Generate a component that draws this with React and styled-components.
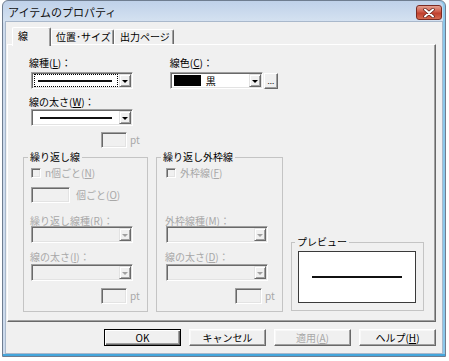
import React from 'react';
import styled, { createGlobalStyle } from 'styled-components';

const Global = createGlobalStyle`
  html, body { margin: 0; padding: 0; background: #ffffff; }
  body { font-family: "Noto Sans CJK JP", "Noto Sans", sans-serif; }
  * { box-sizing: border-box; }
`;

const Window = styled.div`
  margin-left: 2px;
  width: 444px;
  height: 357px;
  border: 1px solid #6f7d90;
  border-radius: 6px 6px 0 0;
  padding: 0 2px 2px 2px;
  background: linear-gradient(#bfd1e9, #d5e2f1 21px, #cddbed 22px, #cddbed);
  box-shadow: inset 0 -2px 0 #45a6dc, inset -2px 0 0 #8cc8ea;
  display: flex;
  flex-direction: column;
`;

const TitleBar = styled.div`
  height: 20px;
  display: flex;
  align-items: center;
  padding-left: 3px;
`;

const Title = styled.div`
  flex: 1;
  font-size: 11px;
  line-height: 13px;
  color: #111;
  margin-top: 2px;
`;

const CloseButton = styled.div`
  width: 26px;
  height: 15px;
  margin: 3px 1px 0 0;
  border: 1px solid #7a2a22;
  border-radius: 3px;
  background: linear-gradient(#e4a090, #cf5a48 45%, #c0402e 55%, #d66a50);
  display: flex;
  align-items: center;
  justify-content: center;
`;

const Client = styled.div`
  flex: 1;
  border: 1px solid #a9b8cb;
  background: #f0f0f0;
  padding: 5px 5px 0 1px;
  display: flex;
  flex-direction: column;
`;

const TabRow = styled.div`
  display: flex;
  align-items: flex-end;
  height: 17px;
  margin-left: 5px;
  position: relative;
  z-index: 1;
`;

const Tab = styled.div`
  width: ${p => p.$w}px;
  height: ${p => (p.$active ? 19 : 15)}px;
  margin-bottom: ${p => (p.$active ? -2 : 0)}px;
  background: #f0f0f0;
  border-top: 1px solid #ffffff;
  border-left: 1px solid #ffffff;
  border-right: 1px solid #696969;
  box-shadow: inset -1px 0 0 #a0a0a0;
  border-radius: 2px 2px 0 0;
  font-size: 10px;
  line-height: 12px;
  color: #000;
  display: flex;
  align-items: center;
  padding-left: ${p => p.$pl}px;
  padding-bottom: ${p => (p.$active ? 2 : 0)}px;
  white-space: nowrap;
`;

const Panel = styled.div`
  width: 429px;
  height: 278px;
  border-top: 1px solid #ffffff;
  border-left: 1px solid #ffffff;
  border-right: 1px solid #696969;
  border-bottom: 1px solid #696969;
  box-shadow: inset -1px -1px 0 #a0a0a0;
  padding: 12px 0 0 15px;
  display: flex;
  flex-direction: column;
`;

const TopArea = styled.div`
  display: flex;
`;

const Column = styled.div`
  display: flex;
  flex-direction: column;
  margin-left: ${p => p.$ml || 0}px;
`;

const Label = styled.div`
  font-size: 10px;
  line-height: ${p => p.$lh || 12}px;
  height: ${p => p.$lh || 12}px;
  color: ${p => (p.$disabled ? '#a8a8a8' : '#000')};
  margin-top: ${p => p.$mt || 0}px;
  margin-left: ${p => p.$ml || 0}px;
  white-space: nowrap;
`;

const Combo = styled.div`
  display: flex;
  width: ${p => p.$w}px;
  height: 17px;
  margin-top: ${p => p.$mt || 0}px;
  margin-left: ${p => p.$ml || 0}px;
  border: 1px solid;
  border-color: #a0a0a0 #ffffff #ffffff #a0a0a0;
  box-shadow: inset 1px 1px 0 #696969, inset -1px -1px 0 #e3e3e3;
  background: ${p => (p.$disabled ? '#f0f0f0' : '#ffffff')};
  padding: 1px;
`;

const ComboBody = styled.div`
  flex: 1;
  display: flex;
  align-items: center;
  margin: 0 1px 0 1px;
  padding-left: ${p => p.$pl || 0}px;
  border: 1px dotted ${p => (p.$focus ? '#000' : 'transparent')};
  font-size: 10px;
  line-height: 12px;
  color: #000;
`;

const LineSample = styled.div`
  width: ${p => p.$w}px;
  height: ${p => p.$h}px;
  background: #111;
`;

const DropButton = styled.div`
  width: 12px;
  height: 13px;
  border: 1px solid;
  border-color: #e3e3e3 #696969 #696969 #e3e3e3;
  box-shadow: inset 1px 1px 0 #ffffff, inset -1px -1px 0 #a0a0a0;
  background: #f0f0f0;
  display: flex;
  align-items: center;
  justify-content: center;
`;

const Arrow = styled.span`
  width: 0;
  height: 0;
  border-left: 3px solid transparent;
  border-right: 3px solid transparent;
  border-top: 3px solid ${p => (p.$disabled ? '#a0a0a0' : '#000')};
  margin-top: 1px;
`;

const Swatch = styled.div`
  width: 27px;
  height: 11px;
  background: #000;
  margin-right: 5px;
`;

const ColorRow = styled.div`
  display: flex;
  align-items: center;
  gap: 1px;
  margin-top: 3px;
`;

const SmallButton = styled.div`
  width: 14px;
  height: 16px;
  border: 1px solid;
  border-color: #ffffff #696969 #696969 #ffffff;
  box-shadow: inset -1px -1px 0 #a0a0a0;
  background: #f0f0f0;
  font-size: 8px;
  line-height: 8px;
  color: #000;
  display: flex;
  align-items: flex-end;
  justify-content: center;
  padding-bottom: 3px;
`;

const FieldRow = styled.div`
  display: flex;
  align-items: center;
  margin-top: ${p => p.$mt || 0}px;
  margin-left: ${p => p.$ml || 0}px;
  height: ${p => p.$h || 16}px;
`;

const EditBox = styled.div`
  width: ${p => p.$w}px;
  height: 16px;
  border: 1px solid;
  border-color: #a0a0a0 #ffffff #ffffff #a0a0a0;
  box-shadow: inset 1px 1px 0 #696969, inset -1px -1px 0 #e3e3e3;
  background: #f0f0f0;
`;

const SideText = styled.span`
  font-size: 10px;
  line-height: 12px;
  color: ${p => (p.$disabled ? '#a8a8a8' : '#000')};
  margin-left: ${p => p.$ml || 0}px;
  white-space: nowrap;
`;

const CheckBox = styled.span`
  width: 10px;
  height: 10px;
  border: 1px solid;
  border-color: #a0a0a0 #ffffff #ffffff #a0a0a0;
  box-shadow: inset 1px 1px 0 #696969, inset -1px -1px 0 #e3e3e3;
  background: #f0f0f0;
`;

const GroupsRow = styled.div`
  display: flex;
  gap: 8px;
  margin-top: 3px;
  align-items: flex-start;
`;

const Group = styled.fieldset`
  margin: ${p => p.$mt || 0}px 0 0 0;
  padding: 0;
  min-width: 0;
  width: ${p => p.$w}px;
  border: 1px solid #c4c4c4;
`;

const Legend = styled.legend`
  padding: 0 2px;
  margin-left: ${p => p.$ml}px;
  font-size: 10px;
  line-height: 12px;
  color: #000;
`;

const GroupBody = styled.div`
  display: flex;
  flex-direction: column;
  padding: ${p => p.$pt || 0}px 0 ${p => p.$pb || 0}px ${p => p.$pl}px;
`;

const Blank = styled.div`
  height: ${p => p.$h}px;
`;

const PreviewBox = styled.div`
  width: 118px;
  height: 52px;
  border: 1px solid #3a3a3a;
  background: #ffffff;
  display: flex;
  align-items: center;
  justify-content: center;
`;

const ButtonRow = styled.div`
  display: flex;
  justify-content: flex-end;
  gap: 8px;
  margin-top: 7px;
  padding-right: 0;
  width: 429px;
`;

const Button = styled.button`
  width: 77px;
  height: 17px;
  padding: 0;
  margin: 0;
  font-family: inherit;
  font-size: 10px;
  line-height: 12px;
  background: #f0f0f0;
  color: ${p => (p.disabled ? '#a8a8a8' : '#000')};
  border: 1px solid;
  border-color: ${p => (p.$default ? '#000' : '#ffffff #696969 #696969 #ffffff')};
  box-shadow: ${p =>
    p.$default
      ? 'inset 1px 1px 0 #ffffff, inset -1px -1px 0 #696969, inset -2px -2px 0 #a0a0a0'
      : 'inset -1px -1px 0 #a0a0a0, inset 1px 1px 0 #f8f8f8'};
  display: flex;
  align-items: center;
  justify-content: center;
`;

const DropCombo = ({ w, mt, ml, disabled, focus, children }) => (
  <Combo $w={w} $mt={mt} $ml={ml} $disabled={disabled}>
    <ComboBody $focus={focus}>{children}</ComboBody>
    <DropButton>
      <Arrow $disabled={disabled} />
    </DropButton>
  </Combo>
);

const CloseGlyph = () => (
  <svg width="12" height="10" viewBox="0 0 12 10">
    <path d="M2 1.5 L10 8.5 M10 1.5 L2 8.5" stroke="#5a1a14" strokeWidth="3.4" strokeLinecap="round" />
    <path d="M2 1.5 L10 8.5 M10 1.5 L2 8.5" stroke="#ffffff" strokeWidth="2" strokeLinecap="round" />
  </svg>
);

export default function App() {
  return (
    <>
      <Global />
      <Window>
        <TitleBar>
          <Title>アイテムのプロパティ</Title>
          <CloseButton>
            <CloseGlyph />
          </CloseButton>
        </TitleBar>
        <Client>
          <TabRow>
            <Tab $active $w={39} $pl={5}>線</Tab>
            <Tab $w={63} $pl={4}>位置･サイズ</Tab>
            <Tab $w={60} $pl={5}>出力ページ</Tab>
          </TabRow>
          <Panel>
            <TopArea>
              <Column $ml={6}>
                <Label>線種(<u>L</u>)：</Label>
                <DropCombo w={102} mt={3} ml={2} focus>
                  <LineSample $w={74} $h={2} style={{ marginLeft: 3 }} />
                </DropCombo>
                <Label $mt={7}>線の太さ(<u>W</u>)：</Label>
                <DropCombo w={102} mt={1} ml={2}>
                  <LineSample $w={72} $h={2} style={{ marginLeft: 5 }} />
                </DropCombo>
                <FieldRow $mt={6} $ml={72}>
                  <EditBox $w={26} />
                  <SideText $disabled $ml={3}>pt</SideText>
                </FieldRow>
              </Column>
              <Column $ml={30}>
                <Label>線色(<u>C</u>)：</Label>
                <ColorRow>
                  <DropCombo w={93}>
                    <Swatch />
                    黒
                  </DropCombo>
                  <SmallButton>...</SmallButton>
                </ColorRow>
              </Column>
            </TopArea>
            <GroupsRow>
              <Group $w={125}>
                <Legend $ml={4}>繰り返し線</Legend>
                <GroupBody $pl={7} $pt={5} $pb={7}>
                  <FieldRow $h={10}>
                    <CheckBox />
                    <SideText $disabled $ml={4}>n個ごと(<u>N</u>)</SideText>
                  </FieldRow>
                  <FieldRow $mt={9}>
                    <EditBox $w={39} />
                    <SideText $disabled $ml={6}>個ごと(<u>O</u>)</SideText>
                  </FieldRow>
                  <Label $disabled $mt={12} $lh={11} $ml={-1}>繰り返し線種(<u>R</u>)：</Label>
                  <DropCombo w={102} disabled />
                  <Label $disabled $mt={8} $lh={11} $ml={-1}>線の太さ(<u>I</u>)：</Label>
                  <DropCombo w={102} mt={2} disabled />
                  <FieldRow $mt={7} $ml={70}>
                    <EditBox $w={26} />
                    <SideText $disabled $ml={3}>pt</SideText>
                  </FieldRow>
                </GroupBody>
              </Group>
              <Group $w={127}>
                <Legend $ml={4}>繰り返し外枠線</Legend>
                <GroupBody $pl={9} $pt={5} $pb={7}>
                  <FieldRow $h={10}>
                    <CheckBox />
                    <SideText $disabled $ml={4}>外枠線(<u>F</u>)</SideText>
                  </FieldRow>
                  <Blank $h={25} />
                  <Label $disabled $mt={12} $lh={11} $ml={-1}>外枠線種(<u>M</u>)：</Label>
                  <DropCombo w={102} disabled />
                  <Label $disabled $mt={8} $lh={11} $ml={-1}>線の太さ(<u>D</u>)：</Label>
                  <DropCombo w={102} mt={2} disabled />
                  <FieldRow $mt={7} $ml={69}>
                    <EditBox $w={27} />
                    <SideText $disabled $ml={3}>pt</SideText>
                  </FieldRow>
                </GroupBody>
              </Group>
              <Group $w={133} $mt={85}>
                <Legend $ml={3}>プレビュー</Legend>
                <GroupBody $pl={6} $pt={3} $pb={7}>
                  <PreviewBox>
                    <LineSample $w={90} $h={2} />
                  </PreviewBox>
                </GroupBody>
              </Group>
            </GroupsRow>
          </Panel>
          <ButtonRow>
            <Button $default>OK</Button>
            <Button>キャンセル</Button>
            <Button disabled>適用(<u>A</u>)</Button>
            <Button>ヘルプ(<u>H</u>)</Button>
          </ButtonRow>
        </Client>
      </Window>
    </>
  );
}
